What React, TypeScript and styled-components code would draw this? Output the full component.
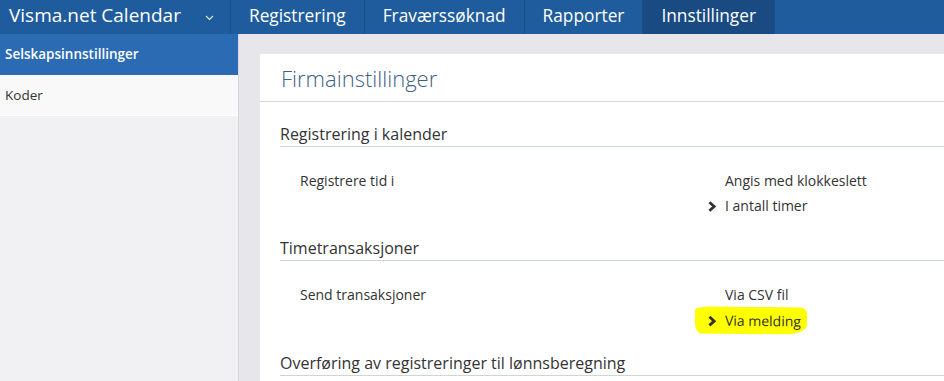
import React from "react";
import styled, { createGlobalStyle } from "styled-components";

const GlobalStyle = createGlobalStyle`
  html, body {
    margin: 0;
    padding: 0;
    overflow: hidden;
    background: #e7e7eb;
    font-family: "Open Sans", "DejaVu Sans", sans-serif;
    color: #333;
  }
`;

const Page = styled.div`
  width: 944px;
  height: 381px;
  display: flex;
  flex-direction: column;
  overflow: hidden;
`;

const TopBar = styled.div`
  height: 34px;
  display: flex;
  align-items: stretch;
  background: #1f5c9d;
  color: #fff;
  flex-shrink: 0;
`;

const Brand = styled.div`
  width: 221px;
  padding-left: 9px;
  display: flex;
  align-items: center;
  justify-content: space-between;
  font-size: 19px;
  border-right: 1px solid #1a4e87;
  line-height: 1;
  padding-bottom: 4px;
  box-sizing: content-box;
`;

const BrandCaret = styled.svg`
  margin-right: 16px;
  margin-top: 6px;
`;

const Tab = styled.div<{ $active?: boolean }>`
  padding: 0 18px 4px;
  display: flex;
  align-items: center;
  font-size: 17.3px;
  background: ${(p) => (p.$active ? "#1a4a82" : "transparent")};
  border-right: 1px solid #1a4e87;
`;

const Body = styled.div`
  flex: 1;
  display: flex;
  min-height: 0;
`;

const Sidebar = styled.div`
  width: 238px;
  flex-shrink: 0;
  background: #f1f1f4;
  border-right: 1px solid #d8d8dc;
`;

const SideItem = styled.div<{ $active?: boolean }>`
  height: 40px;
  padding-left: 5px;
  display: flex;
  align-items: center;
  font-size: 13.5px;
  font-weight: ${(p) => (p.$active ? 600 : 400)};
  color: ${(p) => (p.$active ? "#fff" : "#333")};
  background: ${(p) => (p.$active ? "#2b6bb4" : "#f9f9fa")};
  border-bottom: 1px solid ${(p) => (p.$active ? "#2b6bb4" : "#fff")};
`;

const Main = styled.div`
  flex: 1;
  padding: 20px 0 0 21px;
  min-width: 0;
`;

const Card = styled.div`
  width: 720px;
  background: #fff;
  height: 100%;
`;

const CardHeader = styled.div`
  padding: 10px 0 9px 21px;
  border-bottom: 1px solid #d6d6d6;
`;

const Title = styled.h1`
  margin: 0;
  font-size: 22px;
  font-weight: 300;
  line-height: 28px;
  color: #3f5f85;
`;

const CardBody = styled.div`
  padding: 20px 0 0 20px;
`;

const Section = styled.section`
  padding-bottom: 18px;
`;

const SectionTitle = styled.h2`
  margin: 0;
  font-size: 16px;
  font-weight: 400;
  line-height: 24px;
  color: #333;
  border-bottom: 1px solid #cfd5d2;
`;

const Row = styled.div`
  display: grid;
  grid-template-columns: 408px 1fr;
  padding: 22px 0 0 20px;
  font-size: 14px;
`;

const Label = styled.div`
  line-height: 24px;
`;

const Options = styled.div`
  display: flex;
  flex-direction: column;
  gap: 1px;
`;

const Option = styled.div`
  display: flex;
  align-items: center;
  line-height: 24px;
`;

const Chevron = styled.span`
  width: 17px;
  display: flex;
  align-items: center;
`;

const Marker = styled.span`
  display: inline-flex;
  align-items: center;
  background: #ffff00;
  margin: -1px 0 -1px -13px;
  padding: 2px 6px 1px 13px;
  border-radius: 14% 6% 20% 6% / 12% 25% 35% 40%;
  transform: rotate(0.6deg);
`;

const Arrow = () => (
  <svg width="8" height="11" viewBox="0 0 8 11">
    <polyline
      points="1.4,1.2 6.2,5.5 1.4,9.8"
      fill="none"
      stroke="#333"
      strokeWidth="2.8"
      strokeLinejoin="miter"
    />
  </svg>
);

type Choice = { text: string; selected?: boolean; marked?: boolean };

const OptionLine: React.FC<Choice> = ({ text, selected, marked }) => {
  const inner = (
    <>
      <Chevron>{selected && <Arrow />}</Chevron>
      <span>{text}</span>
    </>
  );
  return <Option>{marked ? <Marker>{inner}</Marker> : inner}</Option>;
};

const sections: { title: string; label?: string; choices?: Choice[] }[] = [
  {
    title: "Registrering i kalender",
    label: "Registrere tid i",
    choices: [
      { text: "Angis med klokkeslett" },
      { text: "I antall timer", selected: true },
    ],
  },
  {
    title: "Timetransaksjoner",
    label: "Send transaksjoner",
    choices: [
      { text: "Via CSV fil" },
      { text: "Via melding", selected: true, marked: true },
    ],
  },
  { title: "Overføring av registreringer til lønnsberegning" },
];

const tabs = ["Registrering", "Fraværssøknad", "Rapporter", "Innstillinger"];

export default function App() {
  return (
    <Page>
      <GlobalStyle />
      <TopBar>
        <Brand>
          <span>Visma.net Calendar</span>
          <BrandCaret width="9" height="6" viewBox="0 0 9 6">
            <polyline points="1,1 4.5,4.5 8,1" fill="none" stroke="#dbe6f3" strokeWidth="1.2" />
          </BrandCaret>
        </Brand>
        {tabs.map((t) => (
          <Tab key={t} $active={t === "Innstillinger"}>
            {t}
          </Tab>
        ))}
      </TopBar>
      <Body>
        <Sidebar>
          <SideItem $active>Selskapsinnstillinger</SideItem>
          <SideItem>Koder</SideItem>
        </Sidebar>
        <Main>
          <Card>
            <CardHeader>
              <Title>Firmainstillinger</Title>
            </CardHeader>
            <CardBody>
              {sections.map((s) => (
                <Section key={s.title}>
                  <SectionTitle>{s.title}</SectionTitle>
                  {s.label && (
                    <Row>
                      <Label>{s.label}</Label>
                      <Options>
                        {s.choices?.map((c) => (
                          <OptionLine key={c.text} {...c} />
                        ))}
                      </Options>
                    </Row>
                  )}
                </Section>
              ))}
            </CardBody>
          </Card>
        </Main>
      </Body>
    </Page>
  );
}
